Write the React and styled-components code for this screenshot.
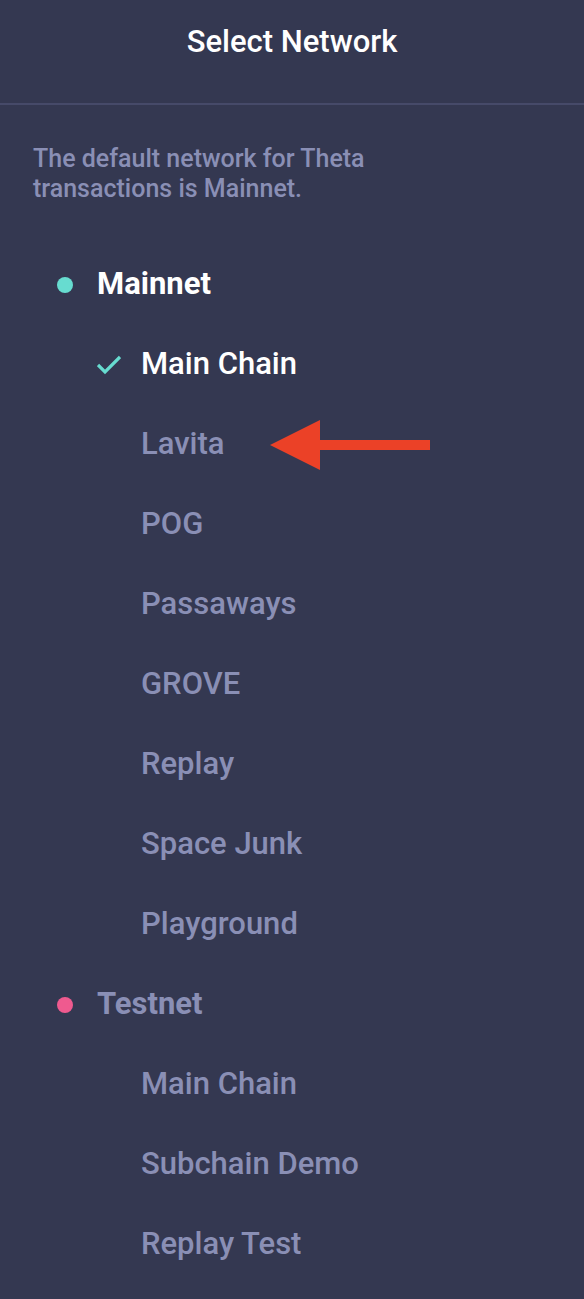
import React, { useState } from "react";
import styled, { createGlobalStyle } from "styled-components";

const GlobalStyle = createGlobalStyle`
  *, *::before, *::after { box-sizing: border-box; }
  body {
    margin: 0;
    background: #343851;
    font-family: Roboto, "Noto Sans", sans-serif;
    font-weight: 500;
    color: #8a8fb5;
  }
`;

const Header = styled.header`
  height: 105px;
  padding-top: 21px;
  border-bottom: 2px solid #464a69;
  text-align: center;
`;

const Title = styled.h1`
  margin: 0;
  font-size: 31px;
  line-height: 42px;
  font-weight: 500;
  color: #ffffff;
`;

const Content = styled.main`
  padding: 39px 33px 14px;
`;

const Description = styled.p`
  margin: 0 0 41px;
  max-width: 380px;
  font-size: 25px;
  line-height: 30px;
`;

const Group = styled.section`
  padding-left: 24px;
`;

const GroupTitle = styled.h2`
  display: flex;
  align-items: center;
  gap: 24px;
  margin: 0;
  height: 80px;
  font-size: 31px;
  font-weight: 700;
  color: ${(p) => (p.$active ? "#ffffff" : "inherit")};
`;

const Dot = styled.span`
  width: 16px;
  height: 16px;
  border-radius: 50%;
  background: ${(p) => p.$color};
`;

const Label = styled.span`
  padding-bottom: 4px;
`;

const List = styled.ul`
  margin: 0;
  padding: 0 0 0 40px;
  list-style: none;
`;

const Item = styled.li`
  position: relative;
`;

const NetworkButton = styled.button`
  display: flex;
  align-items: center;
  width: 100%;
  height: 80px;
  padding: 0;
  border: 0;
  background: none;
  font: inherit;
  font-size: 31px;
  text-align: left;
  color: ${(p) => (p.$active ? "#ffffff" : "inherit")};
  cursor: pointer;
`;

const IconSlot = styled.span`
  display: flex;
  flex: none;
  width: 44px;
`;

const Arrow = styled.svg`
  position: absolute;
  left: 173px;
  top: 15px;
  pointer-events: none;
`;

const groups = [
  {
    name: "Mainnet",
    color: "#67dcd0",
    networks: ["Main Chain", "Lavita", "POG", "Passaways", "GROVE", "Replay", "Space Junk", "Playground"],
  },
  {
    name: "Testnet",
    color: "#ef5a8f",
    networks: ["Main Chain", "Subchain Demo", "Replay Test"],
  },
];

function CheckIcon() {
  return (
    <svg width="24" height="24" viewBox="0 0 24 24" fill="none" aria-hidden="true">
      <path d="M1 12 L8 19 L23 4" stroke="#67dcd0" strokeWidth="3.2" />
    </svg>
  );
}

export default function App() {
  const [selected, setSelected] = useState("Mainnet/Main Chain");
  return (
    <>
      <GlobalStyle />
      <Header>
        <Title>Select Network</Title>
      </Header>
      <Content>
        <Description>The default network for Theta transactions is Mainnet.</Description>
        {groups.map((group) => (
          <Group key={group.name}>
            <GroupTitle $active={selected.startsWith(group.name)}>
              <Dot $color={group.color} />
              <Label>{group.name}</Label>
            </GroupTitle>
            <List>
              {group.networks.map((network) => {
                const id = `${group.name}/${network}`;
                const active = id === selected;
                return (
                  <Item key={id}>
                    <NetworkButton
                      type="button"
                      $active={active}
                      aria-pressed={active}
                      onClick={() => setSelected(id)}
                    >
                      <IconSlot>{active && <CheckIcon />}</IconSlot>
                      <Label>{network}</Label>
                    </NetworkButton>
                    {network === "Lavita" && (
                      <Arrow width="160" height="50" viewBox="0 0 160 50" aria-hidden="true">
                        <path d="M0 25 L50 0 V20 H160 V30 H50 V50 Z" fill="#eb4127" />
                      </Arrow>
                    )}
                  </Item>
                );
              })}
            </List>
          </Group>
        ))}
      </Content>
    </>
  );
}
